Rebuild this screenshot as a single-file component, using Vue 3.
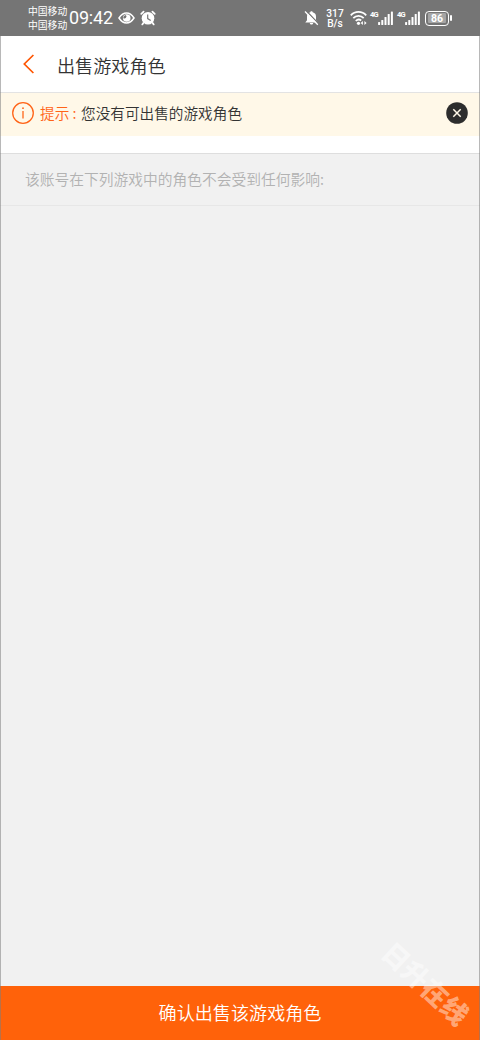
<script setup>
const signalBars = [3, 5, 8, 11, 13.5]
</script>

<template>
  <div class="screen">
    <header class="status">
      <div class="carriers"><span>中国移动</span><span>中国移动</span></div>
      <span class="clock">09:42</span>
      <svg class="eye" width="17" height="14" viewBox="0 0 17 14">
        <path d="M1 7C3.2 3.6 5.7 2.1 8.5 2.1S13.8 3.6 16 7C13.8 10.4 11.3 11.9 8.5 11.9S3.2 10.4 1 7Z" fill="none" stroke="#fff" stroke-width="1.5" />
        <circle cx="8.7" cy="7" r="3.8" fill="#fff" />
        <path d="M5.2 6.9a3 3 0 0 1 2.6-2.9a1.9 1.9 0 0 1-2.6 2.9Z" fill="#757575" />
      </svg>
      <svg class="alarm" width="16" height="16" viewBox="0 0 16 16">
        <circle cx="8" cy="8.2" r="6.3" fill="#fff" />
        <path d="M1.3 3.8L3.6 1.7M14.7 3.8L12.4 1.7M3.3 13l-1 1.4M12.7 13l1 1.4" stroke="#fff" stroke-width="1.8" stroke-linecap="round" />
        <path d="M7.7 4.6v4l3 1.8" fill="none" stroke="#757575" stroke-width="1.2" />
      </svg>
      <div class="grow"></div>
      <svg class="bell" width="15" height="16" viewBox="0 0 15 16">
        <path d="M7.5 1.2c.8 0 1.2.5 1.2 1.1 2.3.6 3.3 2.2 3.3 4.4v3.5l1.7 2.2H1.3L3 10.2V6.7c0-2.2 1-3.8 3.3-4.4 0-.6.4-1.1 1.2-1.1ZM5.8 13.1h3.4c-.2 1-.8 1.5-1.7 1.5s-1.5-.5-1.7-1.5Z" fill="#fff" />
        <path d="M2.2.8L14.6 13.8" stroke="#757575" stroke-width="1.3" />
        <path d="M1 1.5L13.8 14.8" stroke="#fff" stroke-width="1.3" />
      </svg>
      <div class="speed"><span>317</span><span>B/s</span></div>
      <svg class="wifi" width="18" height="16" viewBox="0 0 18 16">
        <g fill="none" stroke="#fff" stroke-width="1.8">
          <path d="M.8 5.4C5 .8 12 .8 16.2 5.4" />
          <path d="M3.3 8.2C6.1 5.2 10.9 5.2 13.7 8.2" />
          <path d="M5.8 11C7.4 9.3 9.6 9.3 11.2 10.5" />
        </g>
        <circle cx="8.5" cy="13.3" r="1.6" fill="#fff" />
        <path d="M10.7 13l2.2-2v4ZM16.6 13l-2.2-2v4Z" fill="#fff" />
      </svg>
      <div v-for="n in 2" :key="n" class="signal">
        <span>4G</span>
        <svg width="16" height="15" viewBox="0 0 16 15">
          <rect v-for="(h, i) in signalBars" :key="i" :x="0.1 + i * 3.2" :y="14 - h" width="2" :height="h" rx=".6" fill="#fff" />
        </svg>
      </div>
      <div class="battery"><span>86</span></div>
      <i class="battery-tip"></i>
    </header>

    <nav class="navbar">
      <svg class="back" width="12" height="20" viewBox="0 0 12 20">
        <path d="M10.4 1L1.3 10l9.1 9" fill="none" stroke="#ff5500" stroke-width="1.7" />
      </svg>
      <h1>出售游戏角色</h1>
    </nav>

    <div class="notice">
      <svg class="info" width="24" height="24" viewBox="0 0 24 24">
        <circle cx="12" cy="12" r="10.3" fill="none" stroke="#ff6418" stroke-width="1.3" />
        <path d="M12 10v7.5" stroke="#ff6418" stroke-width="1.3" />
        <circle cx="12" cy="7.2" r=".9" fill="#ff6418" />
      </svg>
      <span class="label">提示 :</span>
      <span class="message">您没有可出售的游戏角色</span>
      <svg class="close" width="22" height="22" viewBox="0 0 22 22">
        <circle cx="11" cy="11" r="10.8" fill="#2d2d2d" />
        <path d="M7.3 7.3l7.4 7.4M14.7 7.3l-7.4 7.4" stroke="#fff8e8" stroke-width="1.5" />
      </svg>
    </div>

    <div class="gap"></div>
    <p class="hint">该账号在下列游戏中的角色不会受到任何影响:</p>
    <main class="body"></main>
    <button class="confirm">确认出售该游戏角色</button>
    <div class="watermark">日升在线</div>
    <div class="frame"></div>
  </div>
</template>

<style>
body {
  margin: 0;
}
</style>

<style scoped>
.screen {
  position: relative;
  width: 480px;
  height: 1040px;
  overflow: hidden;
  display: flex;
  flex-direction: column;
  background: #f1f1f1;
  font-family: "Noto Sans CJK SC", sans-serif;
  font-weight: 350;
}
.status {
  display: flex;
  align-items: center;
  box-sizing: border-box;
  height: 36px;
  flex: none;
  padding: 0 29px 0 28px;
  background: #757575;
  color: #fff;
}
.carriers {
  display: flex;
  flex-direction: column;
  width: 41px;
  font-size: 9.8px;
  font-weight: 400;
  line-height: 14px;
  white-space: nowrap;
}
.clock {
  width: 49px;
  font: 18px/36px Roboto, sans-serif;
  letter-spacing: -0.2px;
}
.alarm {
  margin-left: 5px;
}
.grow {
  flex: 1;
}
.bell {
  margin-right: 7px;
}
.speed {
  display: flex;
  flex-direction: column;
  gap: 1px;
  align-items: center;
  width: 18px;
  margin: 1px 6px 0 0;
  font: 500 10.2px/9px Roboto, sans-serif;
}
.wifi {
  margin-right: 2px;
}
.signal {
  display: flex;
  align-items: flex-start;
  width: 27px;
}
.signal span {
  width: 8px;
  font: 700 7.5px/8px Roboto, sans-serif;
  letter-spacing: -0.7px;
}
.battery {
  display: flex;
  align-items: center;
  justify-content: center;
  box-sizing: border-box;
  width: 24px;
  height: 15px;
  margin-left: 1px;
  border: 1.5px solid #fff;
  border-radius: 4px;
}
.battery span {
  width: 18px;
  height: 10px;
  border-radius: 1px;
  background: #a4a4a4;
  font: 700 10.5px/11px Roboto, sans-serif;
  text-align: center;
}
.battery-tip {
  width: 2px;
  height: 6px;
  margin: 0 -1px 0 1px;
  border-radius: 1px;
  background: #fff;
}
.navbar {
  display: flex;
  align-items: center;
  flex: none;
  height: 56px;
  padding-left: 23px;
  border-bottom: 1px solid #e3e3e3;
  background: #fff;
}
.navbar h1 {
  margin: 2px 0 0 22px;
  font-size: 18.1px;
  font-weight: 350;
  line-height: 28px;
  color: #333;
}
.notice {
  display: flex;
  align-items: center;
  flex: none;
  box-sizing: border-box;
  height: 43px;
  padding: 0 12px 3px 11px;
  background: #fff8e8;
  font-size: 14.65px;
  line-height: 22px;
}
.label {
  width: 41px;
  margin-left: 5px;
  color: #ff6418;
  white-space: nowrap;
}
.message {
  flex: 1;
  color: #333;
}
.gap {
  flex: none;
  height: 17px;
  border-bottom: 1px solid #dedede;
  background: #fff;
}
.hint {
  flex: none;
  height: 51px;
  margin: 0;
  padding-left: 25px;
  border-bottom: 1px solid #e7e7e7;
  font-size: 14.75px;
  line-height: 49px;
  color: #b2b2b2;
}
.body {
  flex: 1;
}
.confirm {
  flex: none;
  height: 54px;
  padding: 0 0 2px;
  border: 0;
  background: #ff620a;
  color: #fff;
  font: inherit;
  font-size: 18.1px;
}
.watermark {
  position: absolute;
  left: 366px;
  top: 965px;
  width: 120px;
  font-size: 26.5px;
  font-weight: 900;
  line-height: 36px;
  text-align: center;
  color: rgba(255, 255, 255, 0.45);
  transform: rotate(43deg);
}
.frame {
  position: absolute;
  inset: 36px 0 0;
  border: solid rgba(125, 125, 125, 0.55);
  border-width: 0 1px;
}
</style>
